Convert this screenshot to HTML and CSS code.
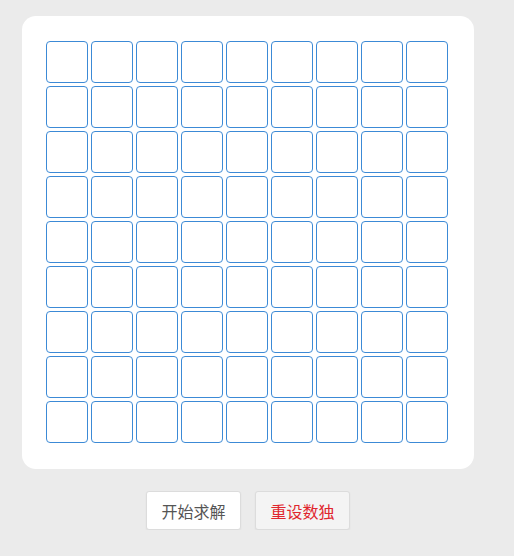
FILE: index.html
```html
<!DOCTYPE html>
<html lang="zh">
<head>
<meta charset="utf-8">
<link rel="stylesheet" href="styles.css">
</head>
<body>
<div class="app">
  <div class="board">
    <div class="grid" id="grid"></div>
  </div>
  <div class="actions">
    <button class="btn btn-solve">开始求解</button>
    <button class="btn btn-reset">重设数独</button>
  </div>
</div>
<script>
var g = document.getElementById('grid');
for (var i = 0; i < 81; i++) {
  var c = document.createElement('div');
  c.className = 'cell';
  g.appendChild(c);
}
</script>
</body>
</html>
```
FILE: styles.css
```css
html, body {
  margin: 0;
  background: #ebebeb;
  font-family: "Liberation Sans", "Noto Sans CJK SC", sans-serif;
}
.app {
  width: 452px;
  padding: 16px 0 0 22px;
}
.board {
  background: #fff;
  border-radius: 14px;
  padding: 25px 26px 26px 24px;
  box-sizing: border-box;
  width: 452px;
  height: 453px;
}
.grid {
  display: grid;
  grid-template-columns: repeat(9, 42px);
  grid-auto-rows: 42px;
  gap: 3px;
}
.cell {
  box-sizing: border-box;
  border: 1px solid #3c8ad6;
  border-radius: 4px;
}
.actions {
  display: flex;
  justify-content: center;
  gap: 14px;
  margin-top: 22px;
}
.btn {
  box-sizing: border-box;
  height: 39px;
  width: 95px;
  padding: 0;
  border: 1px solid #dcdcdc;
  border-radius: 3px;
  font-family: "Noto Sans CJK SC", sans-serif;
  font-size: 16px;
  box-shadow: 0 1px 2px rgba(0,0,0,0.06);
}
.btn-solve {
  background: #fff;
  color: #555;
}
.btn-reset {
  background: #f4f4f4;
  color: #e0262e;
}
```
